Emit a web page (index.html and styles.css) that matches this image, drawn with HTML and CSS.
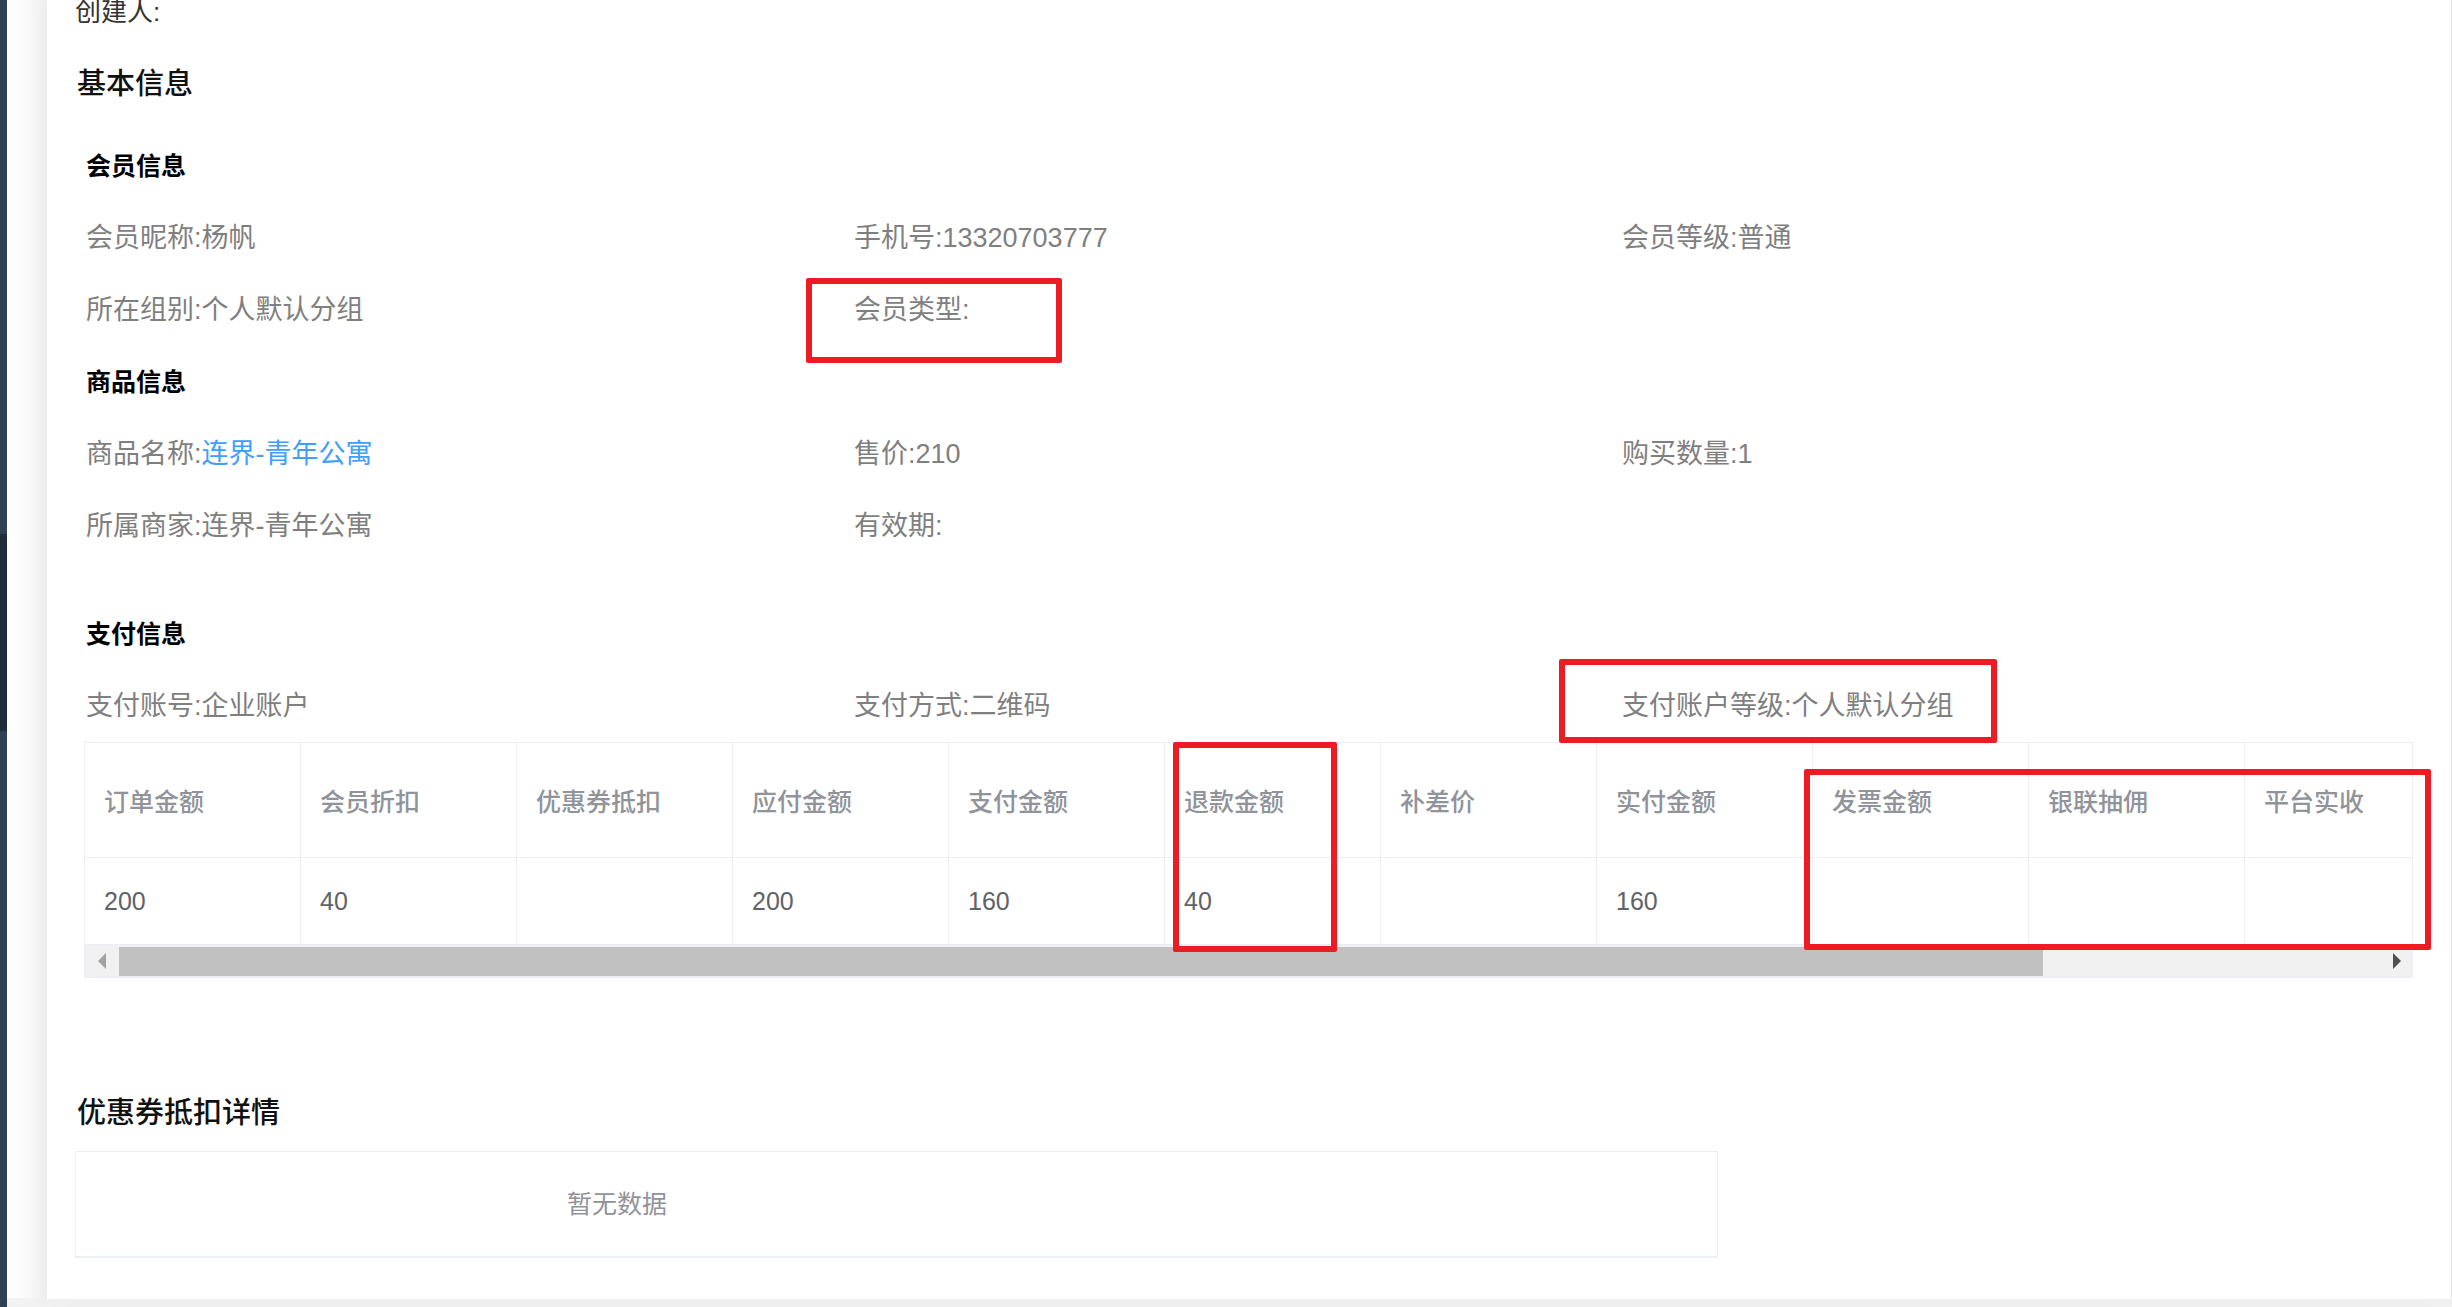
FILE: index.html
```html
<!DOCTYPE html>
<html>
<head>
  <meta charset="utf-8">
  <link rel="stylesheet" href="styles.css">
</head>
<body>
  <div class="sidebar">
    <div class="side-top"></div>
    <div class="side-active"></div>
    <div class="side-rest"></div>
  </div>

  <div class="main">
    <div class="card">
      <div class="creator">创建人:</div>
      <h2 class="title">基本信息</h2>

      <div class="group">
        <h3 class="group-title">会员信息</h3>
        <div class="row">
          <div class="item">会员昵称:杨帆</div>
          <div class="item">手机号:13320703777</div>
          <div class="item">会员等级:普通</div>
        </div>
        <div class="row">
          <div class="item">所在组别:个人默认分组</div>
          <div class="item">会员类型:</div>
          <div class="item"></div>
        </div>

        <h3 class="group-title">商品信息</h3>
        <div class="row">
          <div class="item">商品名称:<a href="#" class="link">连界-青年公寓</a></div>
          <div class="item">售价:210</div>
          <div class="item">购买数量:1</div>
        </div>
        <div class="row">
          <div class="item">所属商家:连界-青年公寓</div>
          <div class="item">有效期:</div>
          <div class="item"></div>
        </div>

        <h3 class="group-title pay-title">支付信息</h3>
        <div class="row">
          <div class="item">支付账号:企业账户</div>
          <div class="item">支付方式:二维码</div>
          <div class="item">支付账户等级:个人默认分组</div>
        </div>

        <div class="table-wrap">
          <div class="table">
            <div class="th">订单金额</div>
            <div class="th">会员折扣</div>
            <div class="th">优惠券抵扣</div>
            <div class="th">应付金额</div>
            <div class="th">支付金额</div>
            <div class="th">退款金额</div>
            <div class="th">补差价</div>
            <div class="th">实付金额</div>
            <div class="th">发票金额</div>
            <div class="th">银联抽佣</div>
            <div class="th">平台实收</div>

            <div class="td">200</div>
            <div class="td">40</div>
            <div class="td"></div>
            <div class="td">200</div>
            <div class="td">160</div>
            <div class="td">40</div>
            <div class="td"></div>
            <div class="td">160</div>
            <div class="td"></div>
            <div class="td"></div>
            <div class="td"></div>
          </div>
          <div class="scrollbar">
            <div class="sb-btn"><span class="arrow-left"></span></div>
            <div class="sb-thumb"></div>
            <div class="sb-space"></div>
            <div class="sb-btn sb-btn-right"><span class="arrow-right"></span></div>
          </div>
        </div>
      </div>

      <h2 class="title coupon-title">优惠券抵扣详情</h2>
      <div class="empty-box">
        <div class="empty-text">暂无数据</div>
      </div>

      <!-- annotation marks -->
      <div class="mark mark-type"></div>
      <div class="mark mark-level"></div>
      <div class="mark mark-refund"></div>
      <div class="mark mark-extra"></div>
    </div>
  </div>
</body>
</html>
```

FILE: styles.css
```css
html, body {
  margin: 0;
  padding: 0;
}

body {
  display: flex;
  width: 2452px;
  height: 1307px;
  overflow: hidden;
  background: #f2f2f2;
  font-family: "Liberation Sans", "Noto Sans CJK SC", sans-serif;
  color: #7f7f7f;
}

.sidebar {
  width: 7px;
  display: flex;
  flex-direction: column;
  flex-shrink: 0;
}

.side-top {
  height: 534px;
  background: #304156;
}

.side-active {
  height: 197px;
  background: #1f2d3d;
}

.side-rest {
  flex: 1;
  background: #304156;
}

.main {
  flex: 1;
  display: flex;
  padding-left: 40px;
  background: linear-gradient(90deg, #ffffff 0, #fbfbfb 18px, #f0f0f0 40px) no-repeat;
  background-size: 40px 1298px;
}

.card {
  position: relative;
  flex: 1;
  align-self: flex-start;
  padding: 0 0 41px 28px;
  background: #fff;
  border-right: 1px solid #e4e4e4;
  box-shadow: 0 0 30px rgba(0, 0, 0, 0.04);
}

.creator {
  margin: 0;
  font-size: 26px;
  line-height: 24px;
  color: #333;
}

.title {
  margin: 40px 0 0 2px;
  font-size: 29px;
  line-height: 40px;
  font-weight: 500;
  color: #111;
}

.group {
  padding-left: 11px;
}

.group-title {
  margin: 26px 0 0;
  font-size: 25px;
  line-height: 72px;
  font-weight: 600;
  color: #000;
}

.row + .group-title {
  margin-top: 0;
}

.pay-title {
  margin-top: 36px !important;
}

.row {
  display: grid;
  grid-template-columns: repeat(3, 768px);
}

.item {
  font-size: 27px;
  line-height: 72px;
  height: 72px;
  color: #7f7f7f;
  white-space: nowrap;
}

.link {
  color: #409eff;
  text-decoration: none;
}

.table-wrap {
  width: 2329px;
  margin-left: -2px;
  box-sizing: border-box;
  border: 1px solid #ebeef5;
  overflow: hidden;
}

.table {
  display: grid;
  grid-template-columns: repeat(11, 216px);
  width: 2376px;
}

.th,
.td {
  display: flex;
  align-items: center;
  box-sizing: border-box;
  padding-left: 19px;
  border-right: 1px solid #ebeef5;
  border-bottom: 1px solid #ebeef5;
  font-size: 25px;
  white-space: nowrap;
}

.th {
  height: 115px;
  color: #909399;
  font-weight: 500;
}

.td {
  height: 87px;
  color: #606266;
}

.scrollbar {
  display: flex;
  height: 32px;
  background: #f1f1f1;
}

.sb-btn {
  width: 34px;
  display: flex;
  align-items: center;
  justify-content: center;
}

.sb-btn-right {
  width: 30px;
}

.sb-thumb {
  width: 1924px;
  margin: 2px 0 1px;
  background: #c1c1c1;
}

.sb-space {
  flex: 1;
}

.arrow-left {
  width: 0;
  height: 0;
  border-top: 8px solid transparent;
  border-bottom: 8px solid transparent;
  border-right: 8px solid #a3a3a3;
}

.arrow-right {
  width: 0;
  height: 0;
  border-top: 8px solid transparent;
  border-bottom: 8px solid transparent;
  border-left: 8px solid #505050;
}

.coupon-title {
  margin-top: 115px;
  margin-left: 2px;
}

.empty-box {
  width: 1643px;
  height: 107px;
  margin-top: 18px;
  box-sizing: border-box;
  border: 1px solid #ebeef5;
  border-bottom-width: 2px;
}

.empty-text {
  width: 1082px;
  line-height: 104px;
  text-align: center;
  font-size: 25px;
  color: #909399;
}

.mark {
  position: absolute;
  box-sizing: border-box;
  border: 6px solid #ed1c24;
  border-radius: 2px;
}

.mark-type {
  left: 759px;
  top: 278px;
  width: 256px;
  height: 85px;
}

.mark-level {
  left: 1512px;
  top: 659px;
  width: 438px;
  height: 84px;
}

.mark-refund {
  left: 1126px;
  top: 742px;
  width: 164px;
  height: 210px;
}

.mark-extra {
  left: 1757px;
  top: 769px;
  width: 627px;
  height: 181px;
}
```
